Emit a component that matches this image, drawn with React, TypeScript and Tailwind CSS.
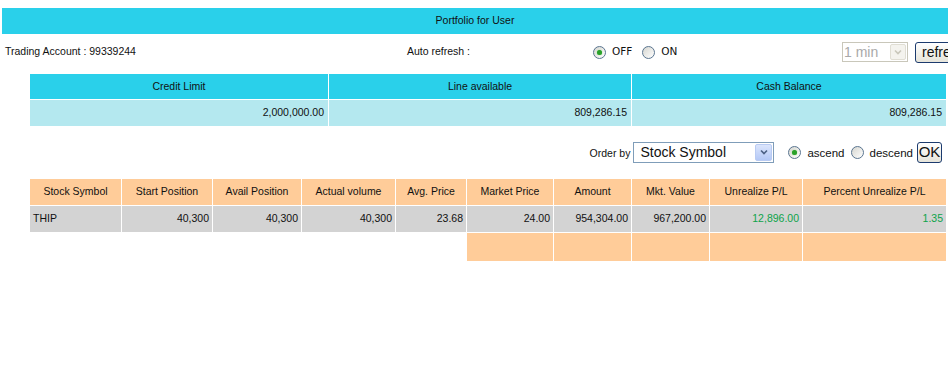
const cols = [
  "Stock Symbol",
  "Start Position",
  "Avail Position",
  "Actual volume",
  "Avg. Price",
  "Market Price",
  "Amount",
  "Mkt. Value",
  "Unrealize P/L",
  "Percent Unrealize P/L",
];

const row = [
  { v: "THIP", left: true },
  { v: "40,300" },
  { v: "40,300" },
  { v: "40,300" },
  { v: "23.68" },
  { v: "24.00" },
  { v: "954,304.00" },
  { v: "967,200.00" },
  { v: "12,896.00", green: true },
  { v: "1.35", green: true },
];

function Radio({ checked }: { checked?: boolean }) {
  return (
    <span className="flex h-[13px] w-[13px] shrink-0 items-center justify-center rounded-full border border-[#5a7590] bg-linear-to-br from-[#d6d6d0] to-white">
      {checked && (
        <span className="h-[5px] w-[5px] rounded-full bg-[#2aa02a] shadow-[0_0_1px_#5fd35f]" />
      )}
    </span>
  );
}

function Chevron({ color }: { color: string }) {
  return (
    <svg width="8" height="6" viewBox="0 0 8 6">
      <path d="M1 1.5 L4 4.5 L7 1.5" fill="none" stroke={color} strokeWidth="1.6" />
    </svg>
  );
}

export default function App() {
  return (
    <div className="h-[384px] w-[948px] overflow-hidden bg-white font-['Liberation_Sans',Arial,sans-serif] text-[10.5px] text-[#111]">
      {/* title bar */}
      <div className="ml-[2px] mt-[8px] flex h-[26px] items-center justify-center bg-[#2ad0ea]">
        Portfolio for User
      </div>

      {/* account / auto refresh */}
      <div className="mt-[8px] flex h-[20px] items-center whitespace-nowrap">
        <div className="w-[407px] shrink-0 pl-[5px]">Trading Account : 99339244</div>
        <div className="w-[186px] shrink-0">Auto refresh :</div>
        <div className="flex w-[249px] shrink-0 items-center font-['DejaVu_Sans',sans-serif] text-[10.5px]">
          <Radio checked />
          <span className="ml-[6px]">OFF</span>
          <span className="ml-[10px] flex">
            <Radio />
          </span>
          <span className="ml-[6px]">ON</span>
        </div>
        <div className="flex h-[20px] w-[66px] shrink-0 items-center justify-between border border-[#c9c7ba] bg-white pl-[1px] pr-[1px] text-[14px] text-[#a9a9a9]">
          <span>1 min</span>
          <span className="flex h-[16px] w-[16px] items-center justify-center rounded-[2px] border border-[#e0ded4] bg-[#f4f3ee]">
            <Chevron color="#c9c7ba" />
          </span>
        </div>
        <div className="ml-[7px] flex h-[21px] shrink-0 items-center rounded-[3px] border border-[#1c3b6e] bg-linear-to-b from-white to-[#e6e4da] pl-[6px] pr-[10px] text-[14px]">
          refresh
        </div>
      </div>

      {/* summary */}
      <div className="ml-[30px] mt-[12px] grid w-[916px] grid-cols-[298px_302px_1fr] gap-px">
        <div className="flex h-[25px] items-center justify-center bg-[#2ad0ea]">Credit Limit</div>
        <div className="flex h-[25px] items-center justify-center bg-[#2ad0ea]">Line available</div>
        <div className="flex h-[25px] items-center justify-center bg-[#2ad0ea]">Cash Balance</div>
        <div className="flex h-[26px] items-center justify-end bg-[#b4e8ef] pr-[4px]">2,000,000.00</div>
        <div className="flex h-[26px] items-center justify-end bg-[#b4e8ef] pr-[4px]">809,286.15</div>
        <div className="flex h-[26px] items-center justify-end bg-[#b4e8ef] pr-[4px]">809,286.15</div>
      </div>

      {/* order by */}
      <div className="mt-[15px] flex h-[22px] items-center justify-end whitespace-nowrap pr-[6px]">
        <span className="mt-[4px]">Order by</span>
        <div className="ml-[3px] flex h-[21px] w-[141px] items-center justify-between border border-[#7f9db9] bg-white pl-[6px] pr-[1px] text-[14px]">
          <span>Stock Symbol</span>
          <span className="flex h-[17px] w-[17px] items-center justify-center rounded-[2px] border border-[#b9cbf3] bg-linear-to-b from-[#dbe5fc] to-[#b4c8f6]">
            <Chevron color="#4d6185" />
          </span>
        </div>
        <span className="ml-[14px] flex">
          <Radio checked />
        </span>
        <span className="ml-[6px] mt-[3px] text-[11.5px]">ascend</span>
        <span className="ml-[6px] flex">
          <Radio />
        </span>
        <span className="ml-[6px] mt-[3px] text-[11.5px]">descend</span>
        <div className="ml-[4px] flex h-[21px] w-[25px] items-center justify-center rounded-[3px] border border-[#1c3b6e] bg-linear-to-b from-white to-[#e6e4da] text-[15px]">
          OK
        </div>
      </div>

      {/* positions */}
      <div className="ml-[30px] mt-[16px] grid w-[916px] grid-cols-[91px_90px_88px_93px_70px_86px_77px_77px_92px_1fr] gap-px">
        {cols.map((c) => (
          <div key={c} className="flex h-[26px] items-center justify-center bg-[#ffcc99]">
            {c}
          </div>
        ))}
        {row.map((r, i) => (
          <div
            key={i}
            className={`flex h-[26px] items-center bg-[#d3d3d3] ${
              r.left ? "justify-start pl-[3px]" : "justify-end pr-[3px]"
            } ${r.green ? "text-[#0da34a]" : ""}`}
          >
            {r.v}
          </div>
        ))}
        {cols.map((c, i) => (
          <div key={"x" + c} className={`h-[28px] ${i >= 5 ? "bg-[#ffcc99]" : "bg-white"}`} />
        ))}
      </div>
    </div>
  );
}
